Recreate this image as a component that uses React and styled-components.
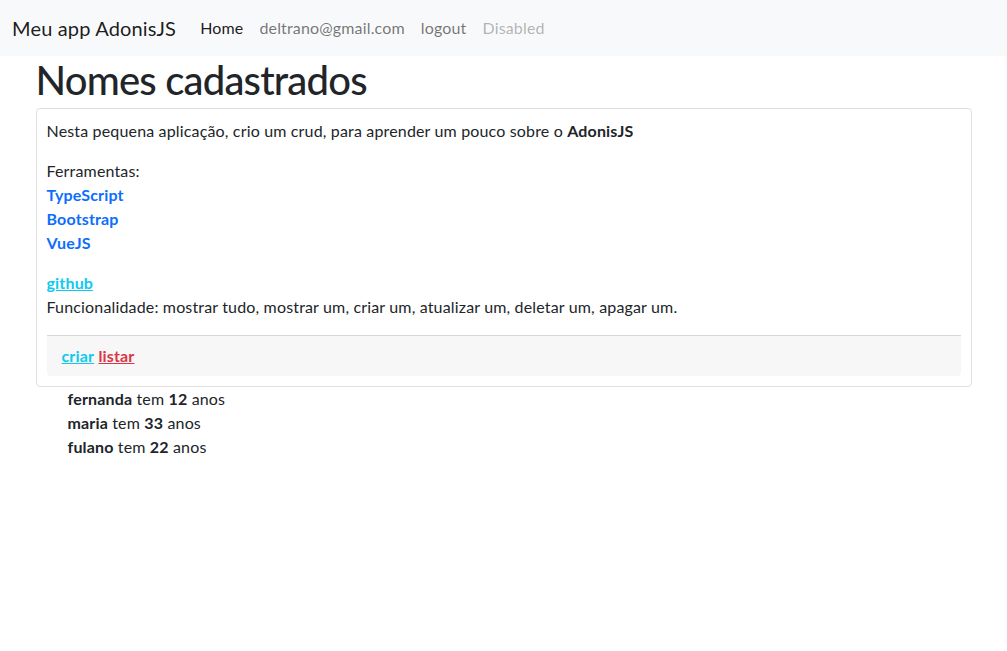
import React from "react";
import styled, { createGlobalStyle } from "styled-components";

const colors = {
  text: "#212529",
  blue: "#0d6efd",
  cyan: "#0dcaf0",
  red: "#dc3545",
  navBg: "#f8f9fa",
};

const GlobalStyle = createGlobalStyle`
  * { box-sizing: border-box; }
  body {
    margin: 0;
    background: #fff;
    color: ${colors.text};
    font-family: Lato, "Open Sans", sans-serif;
    font-size: 16px;
    line-height: 1.5;
    letter-spacing: 0.16px;
  }
`;

const pessoas = [
  { nome: "fernanda", idade: 12 },
  { nome: "maria", idade: 33 },
  { nome: "fulano", idade: 22 },
];

function App() {
  return (
    <>
      <GlobalStyle />
      <Navbar>
        <Brand href="#">Meu app AdonisJS</Brand>
        <NavList>
          <NavLink href="#" active>
            Home
          </NavLink>
          <NavLink href="#">deltrano@gmail.com</NavLink>
          <NavLink href="#">logout</NavLink>
          <NavLink disabled>Disabled</NavLink>
        </NavList>
      </Navbar>
      <Container>
        <Title>Nomes cadastrados</Title>
        <Card>
          <Paragraph>
            Nesta pequena aplicação, crio um crud, para aprender um pouco sobre
            o <b>AdonisJS</b>
          </Paragraph>
          <Paragraph>
            Ferramentas:
            <br />
            <ToolLink href="#">TypeScript</ToolLink>
            <br />
            <ToolLink href="#">Bootstrap</ToolLink>
            <br />
            <ToolLink href="#">VueJS</ToolLink>
          </Paragraph>
          <Paragraph>
            <ActionLink href="#" color={colors.cyan}>
              github
            </ActionLink>
            <br />
            Funcionalidade: mostrar tudo, mostrar um, criar um, atualizar um,
            deletar um, apagar um.
          </Paragraph>
          <CardFooter>
            <ActionLink href="#" color={colors.cyan}>
              criar
            </ActionLink>{" "}
            <ActionLink href="#" color={colors.red}>
              listar
            </ActionLink>
          </CardFooter>
        </Card>
        <NameList>
          {pessoas.map((p) => (
            <li key={p.nome}>
              <b>{p.nome}</b> tem <b>{p.idade}</b> anos
            </li>
          ))}
        </NameList>
      </Container>
    </>
  );
}

const Navbar = styled.nav`
  display: flex;
  align-items: center;
  height: 56px;
  padding: 0 12px;
  background: ${colors.navBg};
`;

const Brand = styled.a`
  font-size: 20px;
  line-height: 30px;
  margin-right: 16px;
  color: rgba(0, 0, 0, 0.9);
  text-decoration: none;
`;

const NavList = styled.div`
  display: flex;
`;

const NavLink = styled.a`
  padding: 8px;
  text-decoration: none;
  color: ${(p) =>
    p.active
      ? "rgba(0, 0, 0, 0.9)"
      : p.disabled
      ? "rgba(0, 0, 0, 0.3)"
      : "rgba(0, 0, 0, 0.55)"};
`;

const Container = styled.main`
  width: 960px;
  margin: 0 auto;
  padding: 0 12px;
`;

const Title = styled.h1`
  margin: 0 0 4px;
  font-size: 40px;
  font-weight: 500;
  line-height: 48px;
  letter-spacing: -0.8px;
`;

const Card = styled.div`
  border: 1px solid rgba(0, 0, 0, 0.125);
  border-radius: 4px;
  padding: 10px;
`;

const Paragraph = styled.p`
  margin: 0 0 16px;
`;

const ToolLink = styled.a`
  color: ${colors.blue};
  font-weight: 700;
  text-decoration: none;
`;

const ActionLink = styled.a`
  color: ${(p) => p.color};
  font-weight: 700;
  text-decoration: underline;
`;

const CardFooter = styled.div`
  padding: 8px 15px;
  background: rgba(0, 0, 0, 0.03);
  border-top: 1px solid rgba(0, 0, 0, 0.125);
  border-radius: 0 0 4px 4px;
`;

const NameList = styled.ul`
  list-style: none;
  margin: 0;
  padding-left: 32px;
`;

export default App;
